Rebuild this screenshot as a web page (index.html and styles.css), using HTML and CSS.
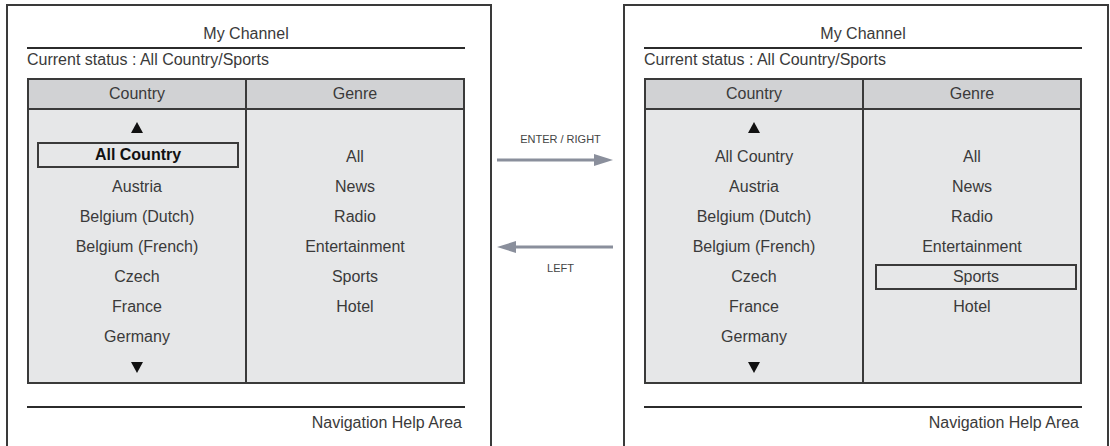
FILE: index.html
```html
<!DOCTYPE html>
<html lang="en">
<head>
    <meta charset="UTF-8">
    <meta name="viewport" content="width=device-width, initial-scale=1.0">
    <title>My Channel</title>
    <link rel="stylesheet" href="styles.css">
</head>
<body>
    <div class="screen">
        <section class="panel">
            <h2 class="title">My Channel</h2>
            <p class="status">Current status : All Country/Sports</p>
            <div class="menu">
                <div class="col">
                    <div class="head">Country</div>
                    <ul class="items">
                        <li><svg class="tri" width="12" height="11" viewBox="0 0 12 11"><path d="M6 0 L12 11 L0 11 Z"/></svg></li>
                        <li><span class="sel sel-left">All Country</span></li>
                        <li>Austria</li>
                        <li>Belgium (Dutch)</li>
                        <li>Belgium (French)</li>
                        <li>Czech</li>
                        <li>France</li>
                        <li>Germany</li>
                        <li><svg class="tri" width="12" height="11" viewBox="0 0 12 11"><path d="M0 0 L12 0 L6 11 Z"/></svg></li>
                    </ul>
                </div>
                <div class="col">
                    <div class="head">Genre</div>
                    <ul class="items">
                        <li></li>
                        <li>All</li>
                        <li>News</li>
                        <li>Radio</li>
                        <li>Entertainment</li>
                        <li>Sports</li>
                        <li>Hotel</li>
                    </ul>
                </div>
            </div>
            <div class="help">Navigation Help Area</div>
        </section>

        <div class="keys">
            <div class="key-label">ENTER / RIGHT</div>
            <svg class="key-arrow" width="116" height="12" viewBox="0 0 116 12">
                <rect x="0" y="4.5" width="100" height="3"/>
                <path d="M97 0 L116 6 L97 12 Z"/>
            </svg>
            <svg class="key-arrow key-back" width="116" height="12" viewBox="0 0 116 12">
                <rect x="16" y="4.5" width="100" height="3"/>
                <path d="M19 0 L0 6 L19 12 Z"/>
            </svg>
            <div class="key-label">LEFT</div>
        </div>

        <section class="panel">
            <h2 class="title">My Channel</h2>
            <p class="status">Current status : All Country/Sports</p>
            <div class="menu">
                <div class="col">
                    <div class="head">Country</div>
                    <ul class="items">
                        <li><svg class="tri" width="12" height="11" viewBox="0 0 12 11"><path d="M6 0 L12 11 L0 11 Z"/></svg></li>
                        <li>All Country</li>
                        <li>Austria</li>
                        <li>Belgium (Dutch)</li>
                        <li>Belgium (French)</li>
                        <li>Czech</li>
                        <li>France</li>
                        <li>Germany</li>
                        <li><svg class="tri" width="12" height="11" viewBox="0 0 12 11"><path d="M0 0 L12 0 L6 11 Z"/></svg></li>
                    </ul>
                </div>
                <div class="col">
                    <div class="head">Genre</div>
                    <ul class="items">
                        <li></li>
                        <li>All</li>
                        <li>News</li>
                        <li>Radio</li>
                        <li>Entertainment</li>
                        <li><span class="sel sel-right">Sports</span></li>
                        <li>Hotel</li>
                    </ul>
                </div>
            </div>
            <div class="help">Navigation Help Area</div>
        </section>
    </div>
</body>
</html>
```

FILE: styles.css
```css
body {
    margin: 0;
    background: #fff;
    font-family: "Liberation Sans", Arial, sans-serif;
    color: #3a3a3a;
    overflow: hidden;
}
.screen {
    display: flex;
    align-items: flex-start;
    padding: 4px 0 0 6px;
}
.panel {
    width: 486px;
    height: 442px;
    box-sizing: border-box;
    border: 2px solid #3a3a3a;
    border-bottom: none;
    padding: 0 25px 0 19px;
}
.title {
    margin: 0;
    padding: 18px 0 3px;
    font-size: 16px;
    font-weight: normal;
    line-height: 20px;
    text-align: center;
    border-bottom: 2px solid #2b2b2b;
}
.status {
    margin: 0;
    padding: 1px 0 8px;
    font-size: 16px;
    line-height: 20px;
}
.menu {
    display: flex;
    border: 2px solid #3a3a3a;
    background: #e6e7e8;
}
.col {
    flex: 1;
}
.col + .col {
    border-left: 2px solid #3a3a3a;
}
.head {
    height: 28px;
    line-height: 28px;
    text-align: center;
    font-size: 16px;
    background: #d1d2d4;
    border-bottom: 2px solid #3a3a3a;
}
.items {
    list-style: none;
    margin: 0;
    padding: 2px 0 0;
    height: 270px;
}
.items li {
    height: 30px;
    display: flex;
    align-items: center;
    justify-content: center;
    font-size: 16px;
}
.tri {
    fill: #111;
}
.sel {
    flex: 1;
    height: 26px;
    box-sizing: border-box;
    border: 2px solid #3a3a3a;
    display: flex;
    align-items: center;
    justify-content: center;
}
.sel-left {
    margin: -4px 6px 0 8px;
    font-weight: bold;
    color: #111;
}
.sel-right {
    margin: 0 3px 0 11px;
}
.help {
    margin-top: 22px;
    padding: 5px 3px 0 0;
    border-top: 2px solid #2b2b2b;
    font-size: 16px;
    line-height: 20px;
    text-align: right;
}
.keys {
    width: 131px;
    flex: none;
    display: flex;
    flex-direction: column;
    align-items: center;
    padding-top: 128px;
}
.key-label {
    font-size: 11px;
    line-height: 14px;
    color: #444;
    padding-left: 6px;
}
.key-arrow {
    fill: #8a8f9c;
    margin: 8px 0 0 -6px;
}
.key-back {
    margin-top: 75px;
    margin-bottom: 8px;
}
```
